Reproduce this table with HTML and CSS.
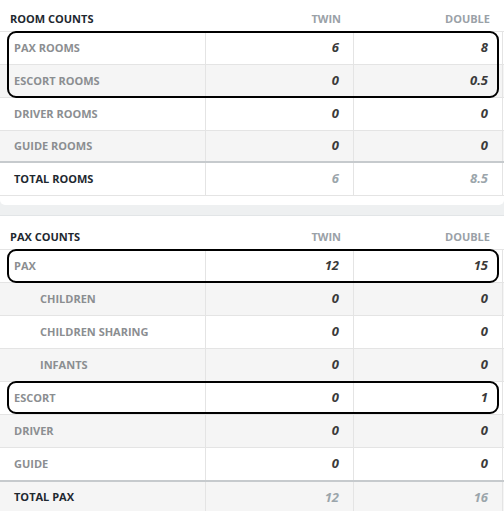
FILE: index.html
```html
<!DOCTYPE html>
<html>
<head>
<meta charset="utf-8">
<link rel="stylesheet" href="styles.css">
</head>
<body>
<div class="page">
  <section class="card card-first">
    <div class="row head">
      <div class="cell title">ROOM COUNTS</div>
      <div class="cell colh">TWIN</div>
      <div class="cell colh">DOUBLE</div>
    </div>
    <div class="row">
      <div class="cell label">PAX ROOMS</div>
      <div class="cell num">6</div>
      <div class="cell num">8</div>
    </div>
    <div class="row alt">
      <div class="cell label">ESCORT ROOMS</div>
      <div class="cell num">0</div>
      <div class="cell num">0.5</div>
    </div>
    <div class="row">
      <div class="cell label">DRIVER ROOMS</div>
      <div class="cell num">0</div>
      <div class="cell num">0</div>
    </div>
    <div class="row alt last">
      <div class="cell label">GUIDE ROOMS</div>
      <div class="cell num">0</div>
      <div class="cell num">0</div>
    </div>
    <div class="row total">
      <div class="cell label">TOTAL ROOMS</div>
      <div class="cell num">6</div>
      <div class="cell num">8.5</div>
    </div>
  </section>

  <section class="card card-second">
    <div class="row head">
      <div class="cell title">PAX COUNTS</div>
      <div class="cell colh">TWIN</div>
      <div class="cell colh">DOUBLE</div>
    </div>
    <div class="row">
      <div class="cell label">PAX</div>
      <div class="cell num">12</div>
      <div class="cell num">15</div>
    </div>
    <div class="row alt">
      <div class="cell label sub">CHILDREN</div>
      <div class="cell num">0</div>
      <div class="cell num">0</div>
    </div>
    <div class="row">
      <div class="cell label sub">CHILDREN SHARING</div>
      <div class="cell num">0</div>
      <div class="cell num">0</div>
    </div>
    <div class="row alt">
      <div class="cell label sub">INFANTS</div>
      <div class="cell num">0</div>
      <div class="cell num">0</div>
    </div>
    <div class="row">
      <div class="cell label">ESCORT</div>
      <div class="cell num">0</div>
      <div class="cell num">1</div>
    </div>
    <div class="row alt">
      <div class="cell label">DRIVER</div>
      <div class="cell num">0</div>
      <div class="cell num">0</div>
    </div>
    <div class="row last">
      <div class="cell label">GUIDE</div>
      <div class="cell num">0</div>
      <div class="cell num">0</div>
    </div>
    <div class="row total alt">
      <div class="cell label">TOTAL PAX</div>
      <div class="cell num">12</div>
      <div class="cell num">16</div>
    </div>
  </section>

  <div class="mark mark-1"></div>
  <div class="mark mark-2"></div>
  <div class="mark mark-3"></div>
</div>
</body>
</html>
```

FILE: styles.css
```css
html, body {
  margin: 0;
  padding: 0;
  background: #eef0f1;
  overflow: hidden;
}

body {
  font-family: "Open Sans", "Liberation Sans", sans-serif;
  font-weight: 700;
  font-size: 11px;
}

.page {
  position: relative;
  width: 504px;
  height: 511px;
  display: flex;
  flex-direction: column;
}

.card {
  background: #ffffff;
  width: 504px;
  border-top: 1px solid #e2e5e7;
  box-sizing: border-box;
}

.card-first {
  margin-top: -3px;
  padding-bottom: 9px;
  border-radius: 0 0 5px 5px;
}

.card-second {
  margin-top: 10px;
}

.row {
  display: grid;
  grid-template-columns: 206px 148px 149px;
  height: 33px;
  box-sizing: border-box;
  border-bottom: 1px solid #e4e4e4;
}

.row.alt {
  background: #f5f5f5;
}

.row.last {
  border-bottom: none;
  height: 32px;
}

.card-first .row.last {
  height: 30px;
}

.row.total {
  border-top: 2px solid #c6cacd;
  height: 35px;
}

.card-second .row.total {
  height: 34px;
}

.row.head {
  height: 34px;
}

.cell {
  display: flex;
  align-items: center;
  box-sizing: border-box;
  padding-bottom: 2px;
  border-right: 1px solid #e4e4e4;
  white-space: nowrap;
}

.head .cell {
  border-right: none;
  align-items: flex-end;
  padding-bottom: 6px;
  line-height: 13px;
}

.title {
  padding-left: 10px;
  color: #1e2830;
}

.colh {
  justify-content: flex-end;
  padding-right: 13px;
  color: #9aa1a7;
}

.label {
  padding-left: 14px;
  color: #8b8e91;
}

.label.sub {
  padding-left: 40px;
}

.total .label {
  color: #1e2830;
}

.num {
  justify-content: flex-end;
  padding-right: 14px;
  font-style: italic;
  font-size: 13px;
  color: #3a3a3a;
}

.total .num {
  color: #9ba5ab;
}

.mark {
  position: absolute;
  left: 7px;
  width: 492px;
  border: 2px solid #000;
  border-radius: 9px;
  box-sizing: border-box;
  pointer-events: none;
}

.mark-1 {
  top: 31px;
  height: 67px;
}

.mark-2 {
  top: 249px;
  height: 34px;
}

.mark-3 {
  top: 381px;
  height: 33px;
}
```
